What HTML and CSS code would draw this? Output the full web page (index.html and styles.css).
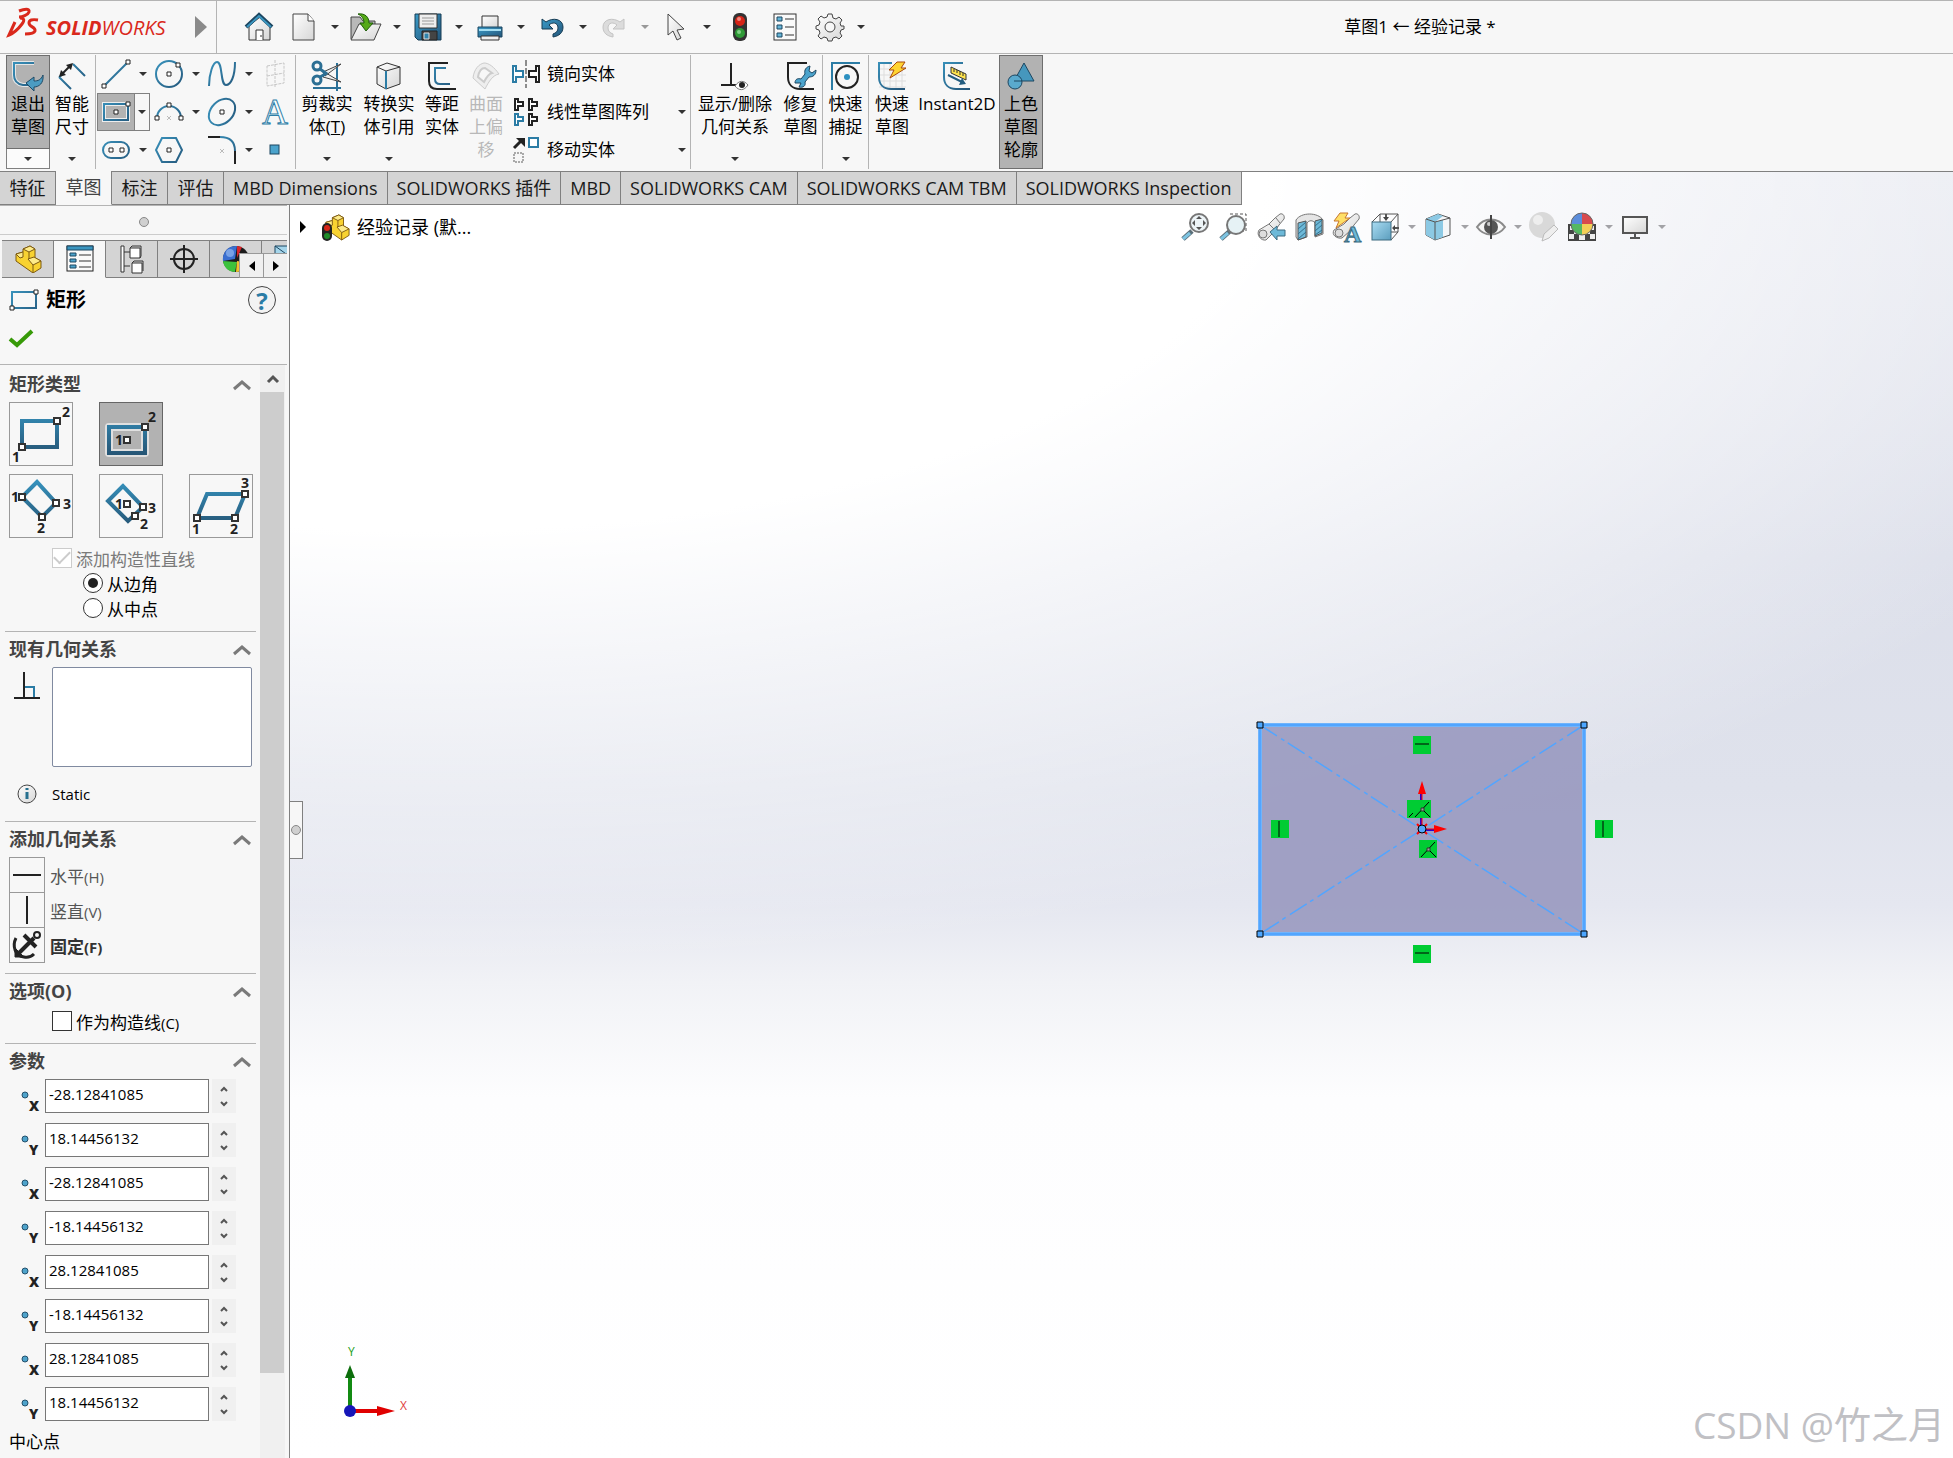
FILE: index.html
```html
<!DOCTYPE html>
<html lang="zh-CN">
<head>
    <meta charset="UTF-8">
    <meta name="viewport" content="width=device-width, initial-scale=1.0">
    <title>SOLIDWORKS - 草图1</title>
    <link rel="stylesheet" href="styles.css">
</head>
<body>
    <!-- shared gradients and symbols -->
    <svg class="defs" width="0" height="0" aria-hidden="true">
        <defs>
            <linearGradient id="blue" x1="0" y1="0" x2="1" y2="1">
                <stop offset="0" stop-color="#3a9bc8"/><stop offset="1" stop-color="#24567a"/>
            </linearGradient>
            <linearGradient id="blueLine" gradientUnits="userSpaceOnUse" x1="0" y1="0" x2="28" y2="28">
                <stop offset="0" stop-color="#3a95bf"/><stop offset="1" stop-color="#24567a"/>
            </linearGradient>
            <linearGradient id="tileLine" gradientUnits="userSpaceOnUse" x1="0" y1="8" x2="0" y2="52">
                <stop offset="0" stop-color="#3590bb"/><stop offset="1" stop-color="#265676"/>
            </linearGradient>
            <linearGradient id="lightBlue" x1="0" y1="0" x2="1" y2="1">
                <stop offset="0" stop-color="#a9dcf2"/><stop offset="1" stop-color="#5b9dbd"/>
            </linearGradient>
            <linearGradient id="paper" x1="0" y1="0" x2="1" y2="1">
                <stop offset="0" stop-color="#ffffff"/><stop offset="1" stop-color="#d6d6d6"/>
            </linearGradient>
            <symbol id="up" viewBox="0 0 20 12"><path d="M2 10 10 3l8 7" fill="none" stroke="#7a7a7a" stroke-width="3"/></symbol>
            <symbol id="spinUp" viewBox="0 0 8 6"><path d="M1 5 4 2l3 3" fill="none" stroke="#555" stroke-width="2"/></symbol>
            <symbol id="spinDown" viewBox="0 0 8 6"><path d="M1 1l3 3 3-3" fill="none" stroke="#555" stroke-width="2"/></symbol>
            <symbol id="dot" viewBox="0 0 8 8"><circle cx="4" cy="4" r="3" fill="#4ea3cb" stroke="#24506c"/></symbol>
            <symbol id="part" viewBox="0 0 28 28">
                <path d="M9 4 16 1l5 3v9l6 3v7l-8 5L2 16V9l7-2z" fill="#f8d231" stroke="#7d5a12"/>
                <path d="M9 4l6 3 6-3-5-3zM2 9l7-2v5l-3 1zM14 14l6-2 7 4-8 4z" fill="#fdeb8a" stroke="#7d5a12"/>
                <path d="M15 7v7M19 20v8" fill="none" stroke="#7d5a12"/>
            </symbol>
        </defs>
    </svg>

    <header class="titlebar">
        <div class="brand">
            <svg width="32" height="32" viewBox="0 0 32 32" fill="none" stroke="#da291c" stroke-width="3">
                <path d="M11 3c5-2 11-3 10 1-1 3-7 5-10 5M12 10c4 0 5 2 2 6-3 4-8 9-13 11l6-13"/>
                <path d="M30 12c-6-1-9 0-9 3 0 4 7 4 6 8-1 3-6 3-10 3"/>
            </svg>
            <span class="brand-name"><b>SOLID</b>WORKS</span>
            <button class="play" aria-label="展开菜单"></button>
        </div>
        <div class="quick">
            <button class="tool" aria-label="主页"><svg width="28" height="28" viewBox="0 0 28 28">
                <path d="M4 13v14h21V13l-10-9z" fill="url(#paper)" stroke="#333"/>
                <path d="M11 27V17h7v10" fill="#fff" stroke="#333"/><path d="M16 22v2" stroke="#333"/>
                <path d="M1 14 14 2l13 12" fill="none" stroke="#1c4661" stroke-width="4"/>
                <path d="M2 14 14 3l12 11" fill="none" stroke="#3a95bf" stroke-width="2"/></svg></button>
            <button class="tool" aria-label="新建"><svg width="24" height="28" viewBox="0 0 24 28">
                <path d="M1 1h15l6 7v19H1z" fill="url(#paper)" stroke="#444"/><path d="M16 1v7h6" fill="#fff" stroke="#444"/></svg></button>
            <button class="caret" aria-label="新建选项"></button>
            <button class="tool" aria-label="打开"><svg width="32" height="28" viewBox="0 0 32 28">
                <path d="M1 26V4h9l3 4h12v4" fill="#b9b9b9" stroke="#444"/>
                <path d="M1 27 9 11h22l-7 16z" fill="url(#paper)" stroke="#444"/>
                <path d="M8 1c7-1 11 3 11 9h4l-7 8-6-8h4c0-4-2-7-6-9z" fill="#55a917" stroke="#1e5d09"/></svg></button>
            <button class="caret" aria-label="打开选项"></button>
            <button class="tool" aria-label="保存"><svg width="28" height="28" viewBox="0 0 28 28">
                <path d="M1 1h26v26H4l-3-3z" fill="url(#blue)" stroke="#173c54"/>
                <path d="M5 1h18v14H5z" fill="#eee" stroke="#333"/><path d="M8 5h12M8 8h12M8 11h12" stroke="#999"/>
                <path d="M8 18h15v9H8z" fill="#444" stroke="#222"/><path d="M10 20h5v6h-5z" fill="#2f83ac" stroke="#ddd"/></svg></button>
            <button class="caret" aria-label="保存选项"></button>
            <button class="tool" aria-label="打印"><svg width="26" height="28" viewBox="0 0 26 28">
                <path d="M5 3h16v12H5z" fill="url(#paper)" stroke="#333"/>
                <path d="M1 14h24v10H1z" fill="url(#blue)" stroke="#1c4661"/><path d="M2 17h22" stroke="#a4def2" stroke-width="2"/>
                <path d="M4 23h18v4H4z" fill="#eee" stroke="#333"/></svg></button>
            <button class="caret" aria-label="打印选项"></button>
            <button class="tool" aria-label="撤消"><svg width="24" height="24" viewBox="0 0 24 24">
                <path d="M2 4v10h11l-4-4c3-3 9-3 9 3 0 3-2 5-5 6v3c6-1 10-4 10-10C23 4 13 2 6 7z" fill="url(#blue)" stroke="#173c54"/></svg></button>
            <button class="caret" aria-label="撤消选项"></button>
            <button class="tool" aria-label="重做" disabled><svg width="24" height="24" viewBox="0 0 24 24">
                <path d="M22 4v10H11l4-4c-3-3-9-3-9 3 0 3 2 5 5 6v3C5 21 1 18 1 12 1 4 11 2 18 7z" fill="#dcdcdc" stroke="#c4c4c4"/></svg></button>
            <button class="caret dim" aria-label="重做选项"></button>
            <button class="tool" aria-label="选择"><svg width="20" height="30" viewBox="0 0 20 30">
                <path d="M2 2v21l5-4 4 9 4-2-4-8 7-1z" fill="url(#paper)" stroke="#444"/></svg></button>
            <button class="caret" aria-label="选择选项"></button>
            <div class="quick-end">
                <button class="tool" aria-label="重建模型"><svg width="14" height="28" viewBox="0 0 14 28">
                    <rect width="14" height="28" rx="6" fill="#333"/><circle cx="7" cy="8" r="5" fill="#d62518"/><circle cx="6" cy="6" r="2" fill="#f08a80"/>
                    <circle cx="7" cy="20" r="5" fill="#2f9a37"/><circle cx="6" cy="19" r="2" fill="#84cf88"/></svg></button>
                <button class="tool" aria-label="文件属性"><svg width="24" height="28" viewBox="0 0 24 28">
                    <rect x="1" y="1" width="22" height="26" fill="#fafafa" stroke="#333"/>
                    <path d="M4 4h5v4H4zM4 12h5v4H4zM4 20h5v4H4z" fill="#66b6d8" stroke="#1c4661"/><path d="M12 6h9M12 14h9M12 22h9" stroke="#333"/></svg></button>
                <button class="tool" aria-label="选项"><svg width="28" height="28" viewBox="0 0 28 28">
                    <path d="M12 1h4l1 4 3 1 3-2 3 3-2 3 1 3 3 0v3l-3 1-1 3 2 3-3 3-3-2-3 1-1 3h-4l-1-3-3-1-3 2-3-3 2-3-1-3-3-1v-3l3-1 1-3-2-3 3-3 3 2 3-1z" fill="url(#paper)" stroke="#444"/>
                    <circle cx="14" cy="14" r="5" fill="#f7f7f7" stroke="#444"/></svg></button>
                <button class="caret" aria-label="选项菜单"></button>
            </div>
        </div>
        <h1 class="doc-title">草图1 ← 经验记录 *</h1>
    </header>

    <section class="ribbon">
        <div class="cmd split">
            <button class="cmd-main"><svg width="32" height="32" viewBox="0 0 32 32">
                <path d="M22 3H2v12c0 5 3 9 9 10h5" fill="none" stroke="#e6e6e6" stroke-width="4"/>
                <path d="M22 3H2v12c0 5 3 9 9 10h5" fill="none" stroke="url(#blueLine)" stroke-width="2"/>
                <path d="M31 15c1 8-4 12-9 12v4l-8-8 8-6v4c4 0 7-1 9-6z" fill="#4b9cc2" stroke="#1f4a66"/></svg><span>退出<br>草图</span></button>
            <button class="cmd-drop caret" aria-label="退出草图选项"></button>
        </div>
        <div class="cmd">
            <button class="cmd-main"><svg width="32" height="32" viewBox="0 0 32 32">
                <path d="M17 4l12 12M3 17l12 12M3 17l3-2" fill="none" stroke="url(#blueLine)" stroke-width="2"/>
                <path d="M6 14 14 6" stroke="#222" stroke-width="2"/><path d="M17 3l-2 7-5-5zM3 17l2-7 5 5z" fill="#222"/></svg><span>智能<br>尺寸</span></button>
            <button class="cmd-drop caret" aria-label="智能尺寸选项"></button>
        </div>

        <div class="sketch-tools">
            <div class="pair"><button class="mini" aria-label="直线"><svg width="28" height="28" viewBox="0 0 28 28">
                <path d="M2 26 26 2" stroke="url(#blueLine)" stroke-width="2"/><path d="M0 24h4v4H0zM24 0h4v4h-4z" fill="#fff" stroke="#222"/></svg></button><button class="caret" aria-label="直线选项"></button></div>
            <div class="pair"><button class="mini" aria-label="圆"><svg width="28" height="28" viewBox="0 0 28 28">
                <circle cx="14" cy="14" r="13" fill="none" stroke="url(#blueLine)" stroke-width="2"/><path d="M12 12h4v4h-4zM21 3h4v4h-4z" fill="#fff" stroke="#222"/></svg></button><button class="caret" aria-label="圆选项"></button></div>
            <div class="pair"><button class="mini" aria-label="样条曲线"><svg width="28" height="28" viewBox="0 0 28 28">
                <path d="M1 26C1 14 5 2 9 2c6 0 3 23 9 23 5 0 9-9 9-23" fill="none" stroke="url(#blueLine)" stroke-width="2"/></svg></button><button class="caret" aria-label="样条曲线选项"></button></div>
            <div class="pair"><button class="mini" aria-label="基准面" disabled><svg width="28" height="28" viewBox="0 0 28 28">
                <path d="M6 6 23 3v20L6 26zM14 0v28M6 16l17-3" fill="none" stroke="#c6c6c6" stroke-dasharray="3 1"/></svg></button></div>
            <div class="pair active"><button class="mini" aria-label="中心矩形"><svg width="28" height="28" viewBox="0 0 28 28">
                <path d="M2 6h24v16H2z" fill="none" stroke="#eee" stroke-width="4"/><path d="M2 6h24v16H2z" fill="none" stroke="url(#blueLine)" stroke-width="2"/><path d="M12 12h4v4h-4zM24 4h4v4h-4z" fill="#fff" stroke="#222"/></svg></button><button class="caret" aria-label="矩形选项"></button></div>
            <div class="pair"><button class="mini" aria-label="圆弧"><svg width="28" height="28" viewBox="0 0 28 28">
                <path d="M2 20a12 12 0 0 1 24 0" fill="none" stroke="url(#blueLine)" stroke-width="2"/><path d="M0 18h4v4H0zM24 18h4v4h-4zM12 5h4v4h-4z" fill="#fff" stroke="#222"/><path d="M12 18l4 4M16 18l-4 4" stroke="#bbb"/></svg></button><button class="caret" aria-label="圆弧选项"></button></div>
            <div class="pair"><button class="mini" aria-label="椭圆"><svg width="28" height="28" viewBox="0 0 28 28">
                <ellipse cx="14" cy="14" rx="15" ry="11" transform="rotate(-45 14 14)" fill="none" stroke="url(#blueLine)" stroke-width="2"/><path d="M12 12h4v4h-4z" fill="#fff" stroke="#222"/></svg></button><button class="caret" aria-label="椭圆选项"></button></div>
            <div class="pair"><button class="mini letter">A</button></div>
            <div class="pair"><button class="mini" aria-label="直槽口"><svg width="28" height="28" viewBox="0 0 28 28">
                <rect x="1" y="6" width="26" height="16" rx="8" fill="none" stroke="url(#blueLine)" stroke-width="2"/><path d="M7 12h4v4H7zM18 12h4v4h-4z" fill="#fff" stroke="#222"/></svg></button><button class="caret" aria-label="槽口选项"></button></div>
            <div class="pair"><button class="mini" aria-label="多边形"><svg width="28" height="28" viewBox="0 0 28 28">
                <path d="M7 2h14l6 12-6 12H7L1 14z" fill="none" stroke="url(#blueLine)" stroke-width="2"/><path d="M12 12h4v4h-4z" fill="#fff" stroke="#222"/></svg></button></div>
            <div class="pair"><button class="mini" aria-label="圆角"><svg width="28" height="28" viewBox="0 0 28 28">
                <path d="M0 1h12M27 15v13" stroke="#222" stroke-width="2"/><path d="M12 1c10 0 15 5 15 14" fill="none" stroke="url(#blueLine)" stroke-width="2"/><path d="M12 13l4 4M16 13l-4 4" stroke="#bbb"/></svg></button><button class="caret" aria-label="圆角选项"></button></div>
            <div class="pair"><button class="mini" aria-label="点"><svg width="28" height="28" viewBox="0 0 28 28">
                <rect x="9" y="9" width="9" height="9" fill="#4ba3cc" stroke="#1c4661"/></svg></button></div>
        </div>

        <div class="cmd wide">
            <button class="cmd-main"><svg width="32" height="32" viewBox="0 0 32 32">
                <path d="M26 3v28M2 28h28" stroke="#2b7198" stroke-width="2"/>
                <path d="M12 12 30 4l-16 12zM12 17l18 5-15-9z" fill="#eee" stroke="#444"/>
                <circle cx="6" cy="6" r="4" fill="none" stroke="#2c6f94" stroke-width="3"/><circle cx="6" cy="20" r="4" fill="none" stroke="#2c6f94" stroke-width="3"/>
                <path d="M9 9l7 5M9 17l7-4" stroke="#2c6f94" stroke-width="3"/></svg><span>剪裁实<br>体(<u>T</u>)</span></button>
            <button class="cmd-drop caret" aria-label="剪裁选项"></button>
        </div>
        <div class="cmd wide">
            <button class="cmd-main"><svg width="32" height="32" viewBox="0 0 32 32">
                <path d="M4 7 14 3l13 4v17l-14 5-9-5z" fill="url(#paper)" stroke="#333"/><path d="M4 7l9 4 14-4" fill="none" stroke="#333"/><path d="M13 11v18" stroke="#2b7ca5" stroke-width="2"/></svg><span>转换实<br>体引用</span></button>
            <button class="cmd-drop caret" aria-label="转换选项"></button>
        </div>
        <div class="cmd">
            <button class="cmd-main"><svg width="32" height="32" viewBox="0 0 32 32">
                <path d="M22 3H3v18c0 5 3 8 8 8h19" fill="none" stroke="#222" stroke-width="2"/><path d="M20 8H9v11c0 3 2 5 5 5h10" fill="none" stroke="url(#blueLine)" stroke-width="2"/></svg><span>等距<br>实体</span></button>
        </div>
        <div class="cmd">
            <button class="cmd-main" disabled><svg width="32" height="32" viewBox="0 0 32 32">
                <path d="M3 18C4 9 9 4 14 3c5 0 10 4 15 11-6 1-10 7-14 15z" fill="#eee" stroke="#ccc"/><path d="M8 17c1-6 4-9 7-9l7 5c-4 1-6 5-8 9z" fill="#f7f7f7" stroke="#ccc" stroke-width="2"/></svg><span>曲面<br>上偏<br>移</span></button>
        </div>

        <div class="cmd-list">
            <div class="cmd-row"><button class="row-main"><svg width="30" height="30" viewBox="0 0 30 30">
                <path d="M15 1v28" stroke="#222" stroke-dasharray="6 2"/><path d="M2 7h3v5h7v6H5v5H2z" fill="#fff" stroke="#2b7ca5" stroke-width="2"/><path d="M28 7h-3v5h-7v6h7v5h3z" fill="#fff" stroke="#222" stroke-width="2"/></svg>镜向实体</button></div>
            <div class="cmd-row"><button class="row-main"><svg width="30" height="30" viewBox="0 0 30 30">
                <path d="M4 2h3v3h5v4H7v4H4zM18 2h3v3h5v4h-5v4h-3zM18 17h3v3h5v4h-5v4h-3z" fill="#fff" stroke="#222" stroke-width="2"/><path d="M4 17h3v3h5v4H7v4H4z" fill="#fff" stroke="#2b7ca5" stroke-width="2"/></svg>线性草图阵列</button><button class="caret" aria-label="阵列选项"></button></div>
            <div class="cmd-row"><button class="row-main"><svg width="30" height="30" viewBox="0 0 30 30">
                <path d="M3 13l8-8" stroke="#222" stroke-width="3"/><path d="M5 3h9v9z" fill="#222"/><rect x="18" y="3" width="9" height="9" fill="#fff" stroke="#2b7ca5" stroke-width="2"/><rect x="3" y="18" width="9" height="9" fill="none" stroke="#aaa" stroke-width="2" stroke-dasharray="2 1"/></svg>移动实体</button><button class="caret" aria-label="移动选项"></button></div>
        </div>

        <div class="cmd relation">
            <button class="cmd-main"><svg width="32" height="32" viewBox="0 0 32 32">
                <path d="M12 3v22M2 25h20" stroke="#222" stroke-width="2"/><path d="M16 26c4-6 9-6 13-1-4 6-9 6-13 1z" fill="#fff" stroke="#777"/><circle cx="23" cy="25" r="3" fill="#222"/></svg><span>显示/删除<br>几何关系</span></button>
            <button class="cmd-drop caret" aria-label="几何关系选项"></button>
        </div>
        <div class="cmd line-after">
            <button class="cmd-main"><svg width="32" height="32" viewBox="0 0 32 32">
                <path d="M22 3H3v14c0 7 4 12 12 12h14" fill="none" stroke="#222" stroke-width="2"/><path d="M10 23c0-4 3-5 6-4l4-5c-1-4 1-7 5-8l-1 5 3 2 4-3c0 5-3 7-7 7l-4 5c1 4-2 6-6 5l2-4z" fill="#4ba3cc" stroke="#1c4661"/></svg><span>修复<br>草图</span></button>
        </div>
        <div class="cmd middle line-after">
            <button class="cmd-main"><svg width="32" height="32" viewBox="0 0 32 32">
                <path d="M2 30V3h28" fill="none" stroke="#2b7ca5" stroke-width="2"/><circle cx="17" cy="17" r="11" fill="none" stroke="#222" stroke-width="2"/><circle cx="17" cy="17" r="3" fill="#2b8fc0"/></svg><span>快速<br>捕捉</span></button>
            <button class="cmd-drop caret" aria-label="快速捕捉选项"></button>
        </div>
        <div class="cmd middle">
            <button class="cmd-main"><svg width="32" height="32" viewBox="0 0 32 32">
                <path d="M8 3v27M14 3v27M20 3v27M26 3v27M3 9h27M3 15h27M3 21h27M3 27h27" stroke="#ddd"/><path d="M16 3H3v14c0 7 4 12 12 12h14" fill="none" stroke="url(#blueLine)" stroke-width="2"/><path d="M21 2h8l-4 6h5L14 18l4-8h-5z" fill="#ffd431" stroke="#a8480d"/></svg><span>快速<br>草图</span></button>
        </div>
        <div class="cmd instant">
            <button class="cmd-main"><svg width="32" height="32" viewBox="0 0 32 32">
                <path d="M22 3H3v14c0 7 4 12 12 12h14" fill="none" stroke="url(#blueLine)" stroke-width="2"/><path d="M10 7l15 7v6l-15-7z" fill="#ffe34d" stroke="#333"/><path d="M13 9v3M16 10v3M19 11v4M22 13v3" stroke="#333"/><path d="M7 15l14 7" stroke="#235d80" stroke-width="2"/><path d="M18 25l7-1-4-6z" fill="#235d80"/></svg><span>Instant2D</span></button>
        </div>
        <div class="cmd pressed">
            <button class="cmd-main"><svg width="32" height="32" viewBox="0 0 32 32">
                <path d="M19 3l10 18H9z" fill="#4697bd" stroke="#1c4661"/><circle cx="10" cy="22" r="7" fill="#5aa9cd" stroke="#1c4661"/><path d="M9 21h8" stroke="#1c4661"/></svg><span>上色<br>草图<br>轮廓</span></button>
        </div>
    </section>

    <main class="workspace">
        <nav class="tabs">
            <a href="#" class="tab">特征</a>
            <a href="#" class="tab current">草图</a>
            <a href="#" class="tab">标注</a>
            <a href="#" class="tab">评估</a>
            <a href="#" class="tab">MBD Dimensions</a>
            <a href="#" class="tab">SOLIDWORKS 插件</a>
            <a href="#" class="tab">MBD</a>
            <a href="#" class="tab">SOLIDWORKS CAM</a>
            <a href="#" class="tab">SOLIDWORKS CAM TBM</a>
            <a href="#" class="tab">SOLIDWORKS Inspection</a>
        </nav>

        <div class="body">
            <aside class="panel">
                <div class="grip"><span class="knob"></span></div>
                <div class="panel-tabs">
                    <button class="ptab" aria-label="特征树"><svg width="28" height="28"><use href="#part"/></svg></button>
                    <button class="ptab on" aria-label="属性管理器"><svg width="28" height="28" viewBox="0 0 28 28">
                        <rect x="1" y="1" width="26" height="25" fill="#fafafa" stroke="#222"/><path d="M1 1h26v4H1z" fill="#3a95bf" stroke="#1c4661"/>
                        <path d="M4 8h6v3H4zM4 14h6v3H4zM4 20h6v3H4z" fill="#4ba3cc" stroke="#1c4661"/><path d="M13 10h12M13 16h12M13 22h12" stroke="#333"/></svg></button>
                    <button class="ptab" aria-label="配置管理器"><svg width="28" height="28" viewBox="0 0 28 28">
                        <path d="M3 1h3v26H3zM6 7h6M6 21h6" fill="#fff" stroke="#333"/><path d="M12 3h10v10H12zM14 18h10v10H14z" fill="#fff" stroke="#333"/><path d="M12 3l2-2h9v10l-1 2M14 18l2-2h9v10" fill="none" stroke="#333"/></svg></button>
                    <button class="ptab" aria-label="尺寸专家"><svg width="28" height="28" viewBox="0 0 28 28">
                        <circle cx="14" cy="14" r="10" fill="none" stroke="#222" stroke-width="2"/><path d="M14 0v28M0 14h28" stroke="#222" stroke-width="2"/></svg></button>
                    <button class="ptab" aria-label="外观管理器"><svg width="28" height="28" viewBox="0 0 28 28">
                        <circle cx="14" cy="14" r="13" fill="#1b1b1b"/><path d="M15 1A13 13 0 0 0 1 16l12-2z" fill="#3b6fd0"/><path d="M1 16c1 7 6 11 12 11l2-10z" fill="#3cc23c"/><path d="M15 1v12l5-11z" fill="#d7262b"/><path d="M14 27c6 0 11-4 13-9l-12-2z" fill="#f0c22c"/><circle cx="8" cy="8" r="4" fill="#a4c4f4" opacity=".6"/></svg></button>
                    <button class="ptab" aria-label="分析"><svg width="28" height="28" viewBox="0 0 28 28">
                        <path d="M1 1h26v10H1z" fill="#a5d5ea" stroke="#1c4661"/><path d="M1 1l14 10V4l9 7" fill="none" stroke="#1c4661"/></svg></button>
                    <div class="tab-scroll">
                        <button aria-label="上一个"><svg width="6" height="10" viewBox="0 0 6 10"><path d="M6 0v10L0 5z"/></svg></button>
                        <button aria-label="下一个"><svg width="6" height="10" viewBox="0 0 6 10"><path d="M0 0v10l6-5z"/></svg></button>
                    </div>
                </div>

                <div class="panel-head">
                    <div class="panel-title">
                        <svg width="28" height="20" viewBox="0 0 28 20"><path d="M2 2h24v16H2z" fill="none" stroke="url(#blueLine)" stroke-width="2"/><path d="M0 16h4v4H0zM24 0h4v4h-4z" fill="#fff" stroke="#222"/></svg>
                        <h2>矩形</h2>
                        <button class="help" aria-label="帮助">?</button>
                    </div>
                    <button class="accept" aria-label="确定"><svg width="24" height="18" viewBox="0 0 24 18"><path d="M0 9l7 6L22 1" fill="none" stroke="#379a08" stroke-width="4"/></svg></button>
                </div>

                <div class="scroller">
                    <div class="sections">
                        <section class="group">
                            <h3>矩形类型<svg width="20" height="12"><use href="#up"/></svg></h3>
                            <div class="tiles">
                                <button class="tile" aria-label="边角矩形"><svg width="62" height="62" viewBox="1 1 62 62">
                                    <path d="M13 19h35v26H13z" class="line"/><path d="M45 16h6v6h-6zM10 42h6v6h-6z" class="mark"/><text x="57" y="15">2</text><text x="7" y="60">1</text></svg></button>
                                <button class="tile chosen" aria-label="中心矩形类型"><svg width="62" height="62" viewBox="1 1 62 62">
                                    <path d="M10 25h36v26H10z" class="halo"/><path d="M10 25h36v26H10z" class="line"/><path d="M43 22h6v6h-6zM25 35h6v6h-6z" class="mark"/><text x="53" y="20">2</text><text x="20" y="43">1</text></svg></button>
                                <span></span>
                                <button class="tile" aria-label="三点边角矩形"><svg width="62" height="62" viewBox="1 1 62 62">
                                    <path d="M28 8 13 23l20 20 14-14z" class="line"/><path d="M10 20h6v6h-6zM44 26h6v6h-6zM30 40h6v6h-6z" class="mark"/><text x="6" y="28">1</text><text x="58" y="35">3</text><text x="32" y="59">2</text></svg></button>
                                <button class="tile" aria-label="三点中心矩形"><svg width="62" height="62" viewBox="1 1 62 62">
                                    <path d="M24 12 9 27l20 20 15-14z" class="line"/><path d="M41 30h6v6h-6zM33 39h6v6h-6zM25 27h6v6h-6z" class="mark"/><text x="20" y="35">1</text><text x="53" y="39">3</text><text x="45" y="55">2</text></svg></button>
                                <button class="tile" aria-label="平行四边形"><svg width="62" height="62" viewBox="1 1 62 62">
                                    <path d="M8 44 18 20h38L46 44z" class="line"/><path d="M53 17h6v6h-6zM43 41h6v6h-6zM5 41h6v6H5z" class="mark"/><text x="7" y="60">1</text><text x="45" y="60">2</text><text x="56" y="14">3</text></svg></button>
                            </div>
                            <div class="choices">
                                <label class="check off"><input type="checkbox" checked disabled>添加构造性直线</label>
                                <label class="check sub"><input type="radio" name="from" checked>从边角</label>
                                <label class="check sub"><input type="radio" name="from">从中点</label>
                            </div>
                        </section>

                        <section class="group">
                            <h3>现有几何关系<svg width="20" height="12"><use href="#up"/></svg></h3>
                            <div class="existing">
                                <svg width="28" height="28" viewBox="0 0 28 28"><path d="M10 0v26M0 26h26" stroke="#222" stroke-width="2"/><path d="M11 15h9v10" fill="none" stroke="#2b7ca5" stroke-width="2"/></svg>
                                <select class="relations" size="4" aria-label="现有几何关系"></select>
                            </div>
                            <div class="status">
                                <svg width="20" height="20" viewBox="0 0 20 20"><circle cx="10" cy="10" r="9" fill="url(#paper)" stroke="#444"/><path d="M10 8v7M10 4v2" stroke="#27708f" stroke-width="3"/></svg>
                                <span>Static</span>
                            </div>
                        </section>

                        <section class="group">
                            <h3>添加几何关系<svg width="20" height="12"><use href="#up"/></svg></h3>
                            <div class="adders">
                                <button><i><svg width="28" height="28" viewBox="0 0 28 28"><path d="M0 14h28" stroke="#222" stroke-width="2"/></svg></i><span>水平<small>(H)</small></span></button>
                                <button><i><svg width="28" height="28" viewBox="0 0 28 28"><path d="M14 0v28" stroke="#222" stroke-width="2"/></svg></i><span>竖直<small>(V)</small></span></button>
                                <button class="strong"><i><svg width="28" height="28" viewBox="0 0 28 28" fill="none" stroke="#222"><circle cx="24" cy="4" r="3" stroke-width="2"/><path d="M21 7 5 23M11 4l12 12" stroke-width="4"/><path d="M3 7c-4 8-1 18 8 19 4 1 8-1 10-3" stroke-width="3"/><path d="M2 17v9h9z" fill="#222"/></svg></i><span>固定<small>(F)</small></span></button>
                            </div>
                        </section>

                        <section class="group">
                            <h3>选项(O)<svg width="20" height="12"><use href="#up"/></svg></h3>
                            <div class="choices-flat">
                                <label class="check"><input type="checkbox"><span>作为构造线<small>(C)</small></span></label>
                            </div>
                        </section>

                        <section class="group">
                            <h3>参数<svg width="20" height="12"><use href="#up"/></svg></h3>
                            <div class="params">
                                <div class="param"><label for="x1"><svg width="8" height="8"><use href="#dot"/></svg>X</label><input type="text" id="x1" value="-28.12841085"><div class="spin"><button aria-label="增加"><svg width="8" height="6"><use href="#spinUp"/></svg></button><button aria-label="减少"><svg width="8" height="6"><use href="#spinDown"/></svg></button></div></div>
                                <div class="param"><label for="y1"><svg width="8" height="8"><use href="#dot"/></svg>Y</label><input type="text" id="y1" value="18.14456132"><div class="spin"><button aria-label="增加"><svg width="8" height="6"><use href="#spinUp"/></svg></button><button aria-label="减少"><svg width="8" height="6"><use href="#spinDown"/></svg></button></div></div>
                                <div class="param"><label for="x2"><svg width="8" height="8"><use href="#dot"/></svg>X</label><input type="text" id="x2" value="-28.12841085"><div class="spin"><button aria-label="增加"><svg width="8" height="6"><use href="#spinUp"/></svg></button><button aria-label="减少"><svg width="8" height="6"><use href="#spinDown"/></svg></button></div></div>
                                <div class="param"><label for="y2"><svg width="8" height="8"><use href="#dot"/></svg>Y</label><input type="text" id="y2" value="-18.14456132"><div class="spin"><button aria-label="增加"><svg width="8" height="6"><use href="#spinUp"/></svg></button><button aria-label="减少"><svg width="8" height="6"><use href="#spinDown"/></svg></button></div></div>
                                <div class="param"><label for="x3"><svg width="8" height="8"><use href="#dot"/></svg>X</label><input type="text" id="x3" value="28.12841085"><div class="spin"><button aria-label="增加"><svg width="8" height="6"><use href="#spinUp"/></svg></button><button aria-label="减少"><svg width="8" height="6"><use href="#spinDown"/></svg></button></div></div>
                                <div class="param"><label for="y3"><svg width="8" height="8"><use href="#dot"/></svg>Y</label><input type="text" id="y3" value="-18.14456132"><div class="spin"><button aria-label="增加"><svg width="8" height="6"><use href="#spinUp"/></svg></button><button aria-label="减少"><svg width="8" height="6"><use href="#spinDown"/></svg></button></div></div>
                                <div class="param"><label for="x4"><svg width="8" height="8"><use href="#dot"/></svg>X</label><input type="text" id="x4" value="28.12841085"><div class="spin"><button aria-label="增加"><svg width="8" height="6"><use href="#spinUp"/></svg></button><button aria-label="减少"><svg width="8" height="6"><use href="#spinDown"/></svg></button></div></div>
                                <div class="param"><label for="y4"><svg width="8" height="8"><use href="#dot"/></svg>Y</label><input type="text" id="y4" value="18.14456132"><div class="spin"><button aria-label="增加"><svg width="8" height="6"><use href="#spinUp"/></svg></button><button aria-label="减少"><svg width="8" height="6"><use href="#spinDown"/></svg></button></div></div>
                            </div>
                            <p class="center-label">中心点</p>
                        </section>
                    </div>
                    <div class="scrollbar">
                        <button aria-label="向上滚动"><svg width="14" height="10" viewBox="0 0 14 10"><path d="M2 8l5-5 5 5" fill="none" stroke="#555" stroke-width="3"/></svg></button>
                        <div class="track"><div class="thumb"></div></div>
                    </div>
                </div>
            </aside>

            <div class="canvas">
                <div class="canvas-top">
                    <button class="tree">
                        <svg width="8" height="12" viewBox="0 0 8 12"><path d="M1 0l6 6-6 6z" fill="#000"/></svg>
                        <svg width="30" height="28" viewBox="0 0 30 28"><g transform="translate(3 0)"><use href="#part" width="26" height="28"/></g><rect x="1" y="10" width="10" height="18" rx="5" fill="#222"/><circle cx="6" cy="15" r="3" fill="#d62518"/><circle cx="6" cy="23" r="3" fill="#1e8a28"/></svg>
                        <span>经验记录 (默...</span>
                    </button>
                    <div class="views">
                        <button class="view" aria-label="整屏显示全图"><svg width="28" height="28" viewBox="0 0 28 28">
                            <path d="M2 26l9-8" stroke="#5a6e78" stroke-width="5"/><path d="M2 26l7-6" stroke="#7dc4e2" stroke-width="3"/><circle cx="18" cy="10" r="9" fill="#edf4f7" stroke="#777" stroke-width="2"/><path d="M18 3l3 3h-6zM18 17l3-3h-6zM11 10l3-3v6zM25 10l-3-3v6z" fill="#555"/></svg></button>
                        <button class="view" aria-label="局部放大"><svg width="28" height="28" viewBox="0 0 28 28">
                            <path d="M11 1h16v17h-5" fill="none" stroke="#555" stroke-dasharray="3 2"/><path d="M2 26l9-8" stroke="#5a6e78" stroke-width="5"/><path d="M2 26l7-6" stroke="#7dc4e2" stroke-width="3"/><circle cx="17" cy="12" r="9" fill="#e6f2f5" stroke="#777" stroke-width="2"/></svg></button>
                        <button class="view" aria-label="上一视图"><svg width="28" height="28" viewBox="0 0 28 28">
                            <path d="M2 17 12 11 18 5 23 1c3-1 5 2 4 5l-5 6-4 6-9 9c-5 1-10-5-7-10z" fill="url(#paper)" stroke="#777"/><circle cx="6" cy="21" r="4" fill="#ddd" stroke="#777"/><path d="M12 11l6 6M19 5l4 5" stroke="#777"/><path d="M13 19l7-6v4h8v6h-8v4z" fill="#6db9d8" stroke="#3c6b80"/></svg></button>
                        <button class="view" aria-label="剖面视图"><svg width="28" height="28" viewBox="0 0 28 28">
                            <path d="M1 7c5-8 22-8 27 0v14l-8 3V10c-2-3-6-3-8 0v14l-9 3-2-3z" fill="#e5e5e5" stroke="#777"/><path d="M3 10l8-2v16l-8 3zM20 8l7-2v14l-7 3z" fill="#6db9d8" stroke="#555"/><path d="M3 16l8-7M3 21l8-7M3 26l8-7M20 13l7-6M20 18l7-6M20 22l7-5" stroke="#356f8c"/></svg></button>
                        <button class="view" aria-label="动态注解视图"><svg width="30" height="30" viewBox="0 0 30 30">
                            <path d="M2 18 12 12 18 6 23 2c3-1 5 2 4 5l-5 6-4 6-8 7c-5 1-11-3-8-8z" fill="url(#paper)" stroke="#777"/><circle cx="7" cy="21" r="4" fill="#ddd" stroke="#777"/><path d="M8 1h8l-3 5h5L4 16l3-7H2z" fill="#ffdf66" stroke="#c7762f"/><text x="12" y="30" class="a-glyph">A</text></svg></button>
                        <button class="view" aria-label="视图定向"><svg width="28" height="28" viewBox="0 0 28 28">
                            <path d="M1 9 9 1h18v18l-7 8M9 1v8M27 1l-7 8M20 19h7" fill="none" stroke="#555"/><rect x="1" y="9" width="19" height="18" fill="url(#lightBlue)" stroke="#3d6b80"/><path d="M15 1v5M22 15h6" stroke="#555" stroke-width="2"/><path d="M12 4h6l-3 4zM24 12v6l-3-3z" fill="#444"/></svg></button>
                        <button class="caret soft" aria-label="视图定向选项"></button>
                        <button class="view" aria-label="显示样式"><svg width="28" height="28" viewBox="0 0 28 28">
                            <path d="M2 6 14 1l12 4v17l-15 5-9-5z" fill="#f4f6f8" stroke="#555"/><path d="M2 6l9 3v18l-9-5zM11 9l8-2v17l-8 3zM2 6l12-5 5 2-8 6z" fill="#8cc9e4"/><path d="M2 6l9 3 15-4M11 9v18" fill="none" stroke="#555"/></svg></button>
                        <button class="caret soft" aria-label="显示样式选项"></button>
                        <button class="view" aria-label="隐藏/显示项目"><svg width="30" height="24" viewBox="0 0 30 24">
                            <path d="M1 12C8 2 22 2 29 12 22 22 8 22 1 12z" fill="#f6f6f6" stroke="#8a8a8a" stroke-width="2"/><circle cx="15" cy="12" r="7" fill="#555"/><circle cx="13" cy="9" r="2" fill="#ccc"/><path d="M15 0v24" stroke="#444" stroke-width="2"/></svg></button>
                        <button class="caret soft" aria-label="隐藏选项"></button>
                        <button class="view" aria-label="编辑外观" disabled><svg width="30" height="30" viewBox="0 0 30 30">
                            <circle cx="13" cy="13" r="13" fill="#d9d9d9"/><circle cx="9" cy="8" r="5" fill="#eee"/><path d="M13 29l2-7 10-9 4 4-9 9z" fill="#eee" stroke="#bbb"/></svg></button>
                        <button class="view" aria-label="应用布景"><svg width="28" height="30" viewBox="0 0 28 30">
                            <path d="M0 12h28v17H0z" fill="#444"/><path d="M2 14h4v4H2zM22 14h4v4h-4zM6 18h4v4H6zM18 18h4v4h-4zM1 22h5v5H1zM11 23h6v5h-6zM22 22h5v5h-5z" fill="#eee"/><path d="M14 1v11H3A11 11 0 0 1 14 1z" fill="#5b8ddb"/><path d="M14 1v11h11A11 11 0 0 0 14 1z" fill="#d84a4e"/><path d="M3 12h11v11A11 11 0 0 1 3 12z" fill="#55b862"/><path d="M25 12H14v11a11 11 0 0 0 11-11z" fill="#f3cf56"/><circle cx="14" cy="12" r="11" fill="none" stroke="#666"/></svg></button>
                        <button class="caret soft" aria-label="布景选项"></button>
                        <button class="view" aria-label="视图设定"><svg width="28" height="24" viewBox="0 0 28 24">
                            <rect x="2" y="2" width="24" height="16" fill="url(#paper)" stroke="#555" stroke-width="2"/><path d="M14 18v4M9 23h10" stroke="#555" stroke-width="2"/></svg></button>
                        <button class="caret soft" aria-label="视图设定选项"></button>
                    </div>
                </div>

                <button class="handle" aria-label="折叠面板"><span class="knob"></span></button>

                <svg class="sketch" width="370" height="260" viewBox="0 0 370 260">
                    <rect x="10" y="15" width="324" height="209" fill="#8f8fb9" fill-opacity=".8"/>
                    <path d="M10 15l324 209M334 15 10 224" fill="none" stroke="#52a5ff" stroke-width="1.5" stroke-dasharray="20 5 4 4"/>
                    <rect x="10" y="15" width="324" height="209" fill="none" stroke="#8ec2f8" stroke-width="4"/>
                    <rect x="10" y="15" width="324" height="209" fill="none" stroke="#52a5ff" stroke-width="3"/>
                    <path d="M7 12h6v6H7zM331 12h6v6h-6zM7 221h6v6H7zM331 221h6v6h-6z" fill="#4da6ff" stroke="#000"/>
                    <path d="M171 119V84M172 120h14" stroke="#3000c8" stroke-width="2"/>
                    <path d="M172 119V84M172 119h14" stroke="#f00"/>
                    <path d="M172 71l4 13h-8zM197 119l-13-4v8z" fill="#f00"/>
                    <path d="M163 26h18v18h-18zM21 110h18v18H21zM345 110h18v18h-18zM163 235h18v18h-18zM157 90h24v18h-24zM169 130h18v18h-18z" fill="#00cc33"/>
                    <path d="M165 34h14M29 111v16M353 111v16M165 243h14" fill="none" stroke="#000"/>
                    <path d="M165 107l14-15M173 100l7 7M159 107l4-4M171 147l14-15M179 140l7 7" fill="none" stroke="#000"/>
                    <path d="M171 98h3v3h-3zM177 138h3v3h-3z" fill="#9aa89a" stroke="#333"/>
                    <path d="M167 114l10 10M177 114l-10 10" stroke="#f00" stroke-width="2"/>
                    <circle cx="172" cy="119" r="4" fill="#52a5ff" stroke="#000"/>
                </svg>

                <svg class="triad" width="70" height="76" viewBox="0 0 70 76">
                    <path d="M11 66V26" stroke="#128a12" stroke-width="4"/><path d="M11 20l5 13H6z" fill="#0c6e0c"/>
                    <path d="M11 66h28" stroke="#e00000" stroke-width="4"/><path d="M56 66l-18-5v10z" fill="#e00000"/>
                    <circle cx="11" cy="66" r="6" fill="#1616b8"/>
                    <text x="9" y="11" fill="#1aa01a">Y</text><text x="61" y="65" fill="#e04040">X</text>
                </svg>

                <p class="watermark">CSDN @竹之月</p>
            </div>
        </div>
    </main>
</body>
</html>
```
FILE: styles.css
```css
:root {
    --chrome: #f7f7f7;
    --edge: #808080;
    --rule: #b4b4b4;
    --pressed: #b2b2b2;
    --font: "Open Sans", "Noto Sans CJK SC", sans-serif;
}
* {
    box-sizing: border-box;
}
body {
    margin: 0;
    height: 100vh;
    display: flex;
    flex-direction: column;
    overflow: hidden;
    font-family: var(--font);
    font-size: 17px;
    color: #000;
    background-color: #fff;
}
button {
    margin: 0;
    padding: 0;
    border: none;
    background: none;
    font: inherit;
    color: inherit;
    display: flex;
    align-items: center;
    justify-content: center;
    cursor: pointer;
}
svg {
    display: block;
    flex: none;
    overflow: visible;
}
.defs {
    position: absolute;
}
h1, h2, h3, p {
    margin: 0;
}

/* dropdown arrows */
.caret {
    width: 17px;
}
.caret::after {
    content: "";
    border: 4px solid transparent;
    border-top-color: #333;
    border-bottom: none;
}
.caret.dim::after {
    border-top-color: #999;
}
.caret.soft {
    width: 15px;
}
.caret.soft::after {
    border-top-color: #a2a2a6;
}

/* title bar */
.titlebar {
    display: flex;
    height: 54px;
    flex: none;
    background-color: var(--chrome);
    border-top: 1px solid var(--rule);
    border-bottom: 1px solid var(--rule);
}
.brand {
    width: 217px;
    flex: none;
    display: flex;
    align-items: center;
    padding-left: 8px;
    padding-bottom: 6px;
    border-right: 1px solid var(--rule);
}
.brand-name {
    margin-left: 6px;
    margin-top: 8px;
    width: 149px;
    font-size: 20px;
    font-style: italic;
    line-height: 24px;
    color: #da291c;
}
.play {
    width: 12px;
    height: 22px;
    margin-top: 6px;
    background-color: #8a8a8a;
    clip-path: polygon(0 0, 100% 50%, 0 100%);
}
.quick {
    display: flex;
    padding-left: 19px;
}
.quick .tool {
    width: 45px;
}
.quick-end {
    display: flex;
    padding-left: 2px;
}
.doc-title {
    flex: 1;
    padding-left: 18px;
    text-align: center;
    font-size: 17px;
    font-weight: normal;
    line-height: 52px;
}

/* command ribbon */
.ribbon {
    display: flex;
    height: 117px;
    flex: none;
    padding: 1px 0 2px 6px;
    background-color: var(--chrome);
}
.cmd {
    width: 44px;
    display: flex;
    flex-direction: column;
}
.cmd.middle {
    width: 46px;
}
.cmd.wide {
    width: 62px;
}
.cmd.relation {
    width: 88px;
}
.cmd.instant {
    width: 84px;
}
.cmd.line-after {
    border-right: 1px solid var(--rule);
}
.cmd-main {
    flex: 1;
    flex-direction: column;
    justify-content: flex-start;
    padding-top: 5px;
    line-height: 23px;
    white-space: nowrap;
}
.cmd-main:disabled {
    color: #b8b8b8;
}
.cmd-drop.caret {
    width: 100%;
    height: 20px;
}
.cmd.split .cmd-main, .cmd.pressed .cmd-main {
    background-color: var(--pressed);
    border: 1px solid #6e6e6e;
    padding-top: 4px;
}
.cmd.split .cmd-drop {
    background-color: #fbfbfb;
    border: 1px solid var(--edge);
    border-top: none;
}
.sketch-tools {
    width: 201px;
    display: grid;
    grid-template-columns: 53px 53px 53px 38px;
    grid-template-rows: repeat(3, 38px);
    padding-left: 1px;
    border-left: 1px solid var(--rule);
    border-right: 1px solid var(--rule);
    margin-left: 1px;
}
.pair {
    display: flex;
}
.mini {
    width: 38px;
}
.mini.letter {
    font-family: "Liberation Serif", serif;
    font-size: 36px;
    line-height: 36px;
    color: #f7fbfd;
    -webkit-text-stroke: 1px #2f7fa8;
}
.pair .caret {
    width: 15px;
}
.pair.active {
    border: 1px solid var(--edge);
}
.pair.active .mini {
    background-color: var(--pressed);
    border-right: 1px solid var(--edge);
}
.cmd-list {
    width: 183px;
    display: grid;
    grid-template-rows: repeat(3, 38px);
    padding-left: 3px;
    border-right: 1px solid var(--rule);
}
.cmd-row {
    display: flex;
    justify-content: space-between;
}
.row-main {
    gap: 6px;
    line-height: 36px;
}

/* workspace: the view gradient runs behind the tabs too */
.workspace {
    flex: 1;
    min-height: 0;
    display: flex;
    flex-direction: column;
    border-top: 1px solid var(--edge);
    background:
        radial-gradient(ellipse 95% 62% at 22% 0, #fff 0, #fff 45%, rgba(255, 255, 255, 0) 100%),
        linear-gradient(#e6e8f0 0, #dcdfea 30%, #dfe2ec 48%, #e5e7f0 57%, #f1f2f6 63%, #fdfdfe 72%, #fff 100%);
}
.tabs {
    display: flex;
    height: 33px;
    flex: none;
}
.tab {
    min-width: 56px;
    padding: 0 9px;
    background-color: #d4d4d4;
    border-right: 1px solid var(--edge);
    border-bottom: 1px solid var(--edge);
    color: #1a1a1a;
    font-size: 18px;
    line-height: 32px;
    text-align: center;
    text-decoration: none;
    white-space: nowrap;
}
.tab.current {
    margin-top: -1px;
    background-color: var(--chrome);
    border-bottom-color: var(--chrome);
    color: #444;
}
.body {
    flex: 1;
    min-height: 0;
    display: flex;
}

/* property panel */
.panel {
    width: 290px;
    flex: none;
    display: flex;
    flex-direction: column;
    background-color: var(--chrome);
    border-right: 1px solid var(--edge);
}
.knob {
    width: 10px;
    height: 10px;
    border-radius: 50%;
    border: 1px solid #888;
    background-color: #d0d0d0;
}
.grip {
    height: 30px;
    margin-right: 2px;
    display: flex;
    align-items: center;
    justify-content: center;
    padding-top: 4px;
    border-top: 1px solid var(--rule);
    border-bottom: 1px solid #ccc;
}
.panel-tabs {
    position: relative;
    display: flex;
    height: 38px;
    margin: 5px 2px 0 0;
    padding-left: 2px;
    overflow: hidden;
}
.ptab {
    width: 52px;
    flex: none;
    background-color: #d4d4d4;
    border: 1px solid var(--edge);
    border-left: none;
}
.ptab.on {
    background-color: var(--chrome);
    border-bottom-color: var(--chrome);
}
.tab-scroll {
    position: absolute;
    right: 0;
    bottom: 0;
    display: flex;
}
.tab-scroll button {
    width: 24px;
    height: 25px;
    background-color: #f0f0f0;
    border: 1px solid #999;
    border-right: none;
}
.panel-head {
    height: 87px;
    flex: none;
    margin-right: 2px;
    padding: 7px 11px 0 10px;
    border-bottom: 1px solid var(--rule);
}
.panel-title {
    display: flex;
    align-items: center;
}
.panel-title h2 {
    flex: 1;
    margin-left: 8px;
    font-size: 20px;
    line-height: 30px;
}
.help {
    width: 28px;
    height: 28px;
    border: 1px solid #444;
    border-radius: 50%;
    background-color: #f3f3f3;
    color: #2b7ca5;
    font-size: 24px;
    font-weight: bold;
}
.accept {
    margin-top: 15px;
}
.scroller {
    flex: 1;
    min-height: 0;
    display: flex;
    overflow: hidden;
}
.sections {
    width: 260px;
    padding: 1px 4px 0 5px;
}
.group {
    padding: 0 4px;
    border-top: 1px solid var(--rule);
}
.group:first-child {
    border-top-color: transparent;
}
.group h3 {
    display: flex;
    align-items: center;
    justify-content: space-between;
    height: 35px;
    font-size: 18px;
    line-height: 35px;
    color: #444;
}
.tiles {
    display: grid;
    grid-template-columns: repeat(3, 64px);
    grid-auto-rows: 64px;
    column-gap: 26px;
    row-gap: 8px;
}
.tile {
    border: 1px solid #999;
}
.tile.chosen {
    background-color: var(--pressed);
    border-color: #666;
}
.tile .line {
    fill: none;
    stroke: url(#tileLine);
    stroke-width: 4;
}
.tile .halo {
    fill: none;
    stroke: #e0e0e0;
    stroke-width: 8;
    stroke-linejoin: round;
}
.tile .mark {
    fill: #fff;
    stroke: #333;
    stroke-width: 2;
}
.tile text {
    font-size: 14px;
    font-weight: bold;
    fill: #222;
    text-anchor: middle;
}
.choices {
    display: flex;
    flex-direction: column;
    gap: 1px;
    padding: 8px 0 11px 43px;
}
.choices-flat {
    padding: 0 0 10px 43px;
}
.check {
    display: flex;
    align-items: center;
    height: 24px;
    gap: 4px;
}
.check.sub {
    margin-left: 31px;
}
.check.off {
    color: #7a7a7a;
}
.check input {
    appearance: none;
    width: 20px;
    height: 20px;
    margin: 0;
    display: grid;
    place-items: center;
    border: 1px solid #333;
    background-color: #fff;
}
.check input[type="radio"] {
    border-radius: 50%;
}
.check input[type="radio"]:checked::after {
    content: "";
    width: 10px;
    height: 10px;
    border-radius: 50%;
    background-color: #222;
}
.check input:disabled {
    border-color: #ccc;
}
.check input[type="checkbox"]:checked::after {
    content: "";
    width: 14px;
    height: 7px;
    margin-bottom: 5px;
    border: 2px solid #ccc;
    border-top: none;
    border-right: none;
    transform: rotate(-45deg);
}
small {
    font-size: 15px;
}
.existing {
    display: flex;
    gap: 10px;
    padding-left: 5px;
}
.existing svg {
    margin-top: 5px;
}
.relations {
    appearance: none;
    width: 200px;
    height: 100px;
    border: 1px solid #808aa0;
    background-color: #fff;
    overflow: hidden;
}
.status {
    display: flex;
    align-items: center;
    gap: 15px;
    height: 24px;
    margin: 15px 0;
    padding-left: 8px;
    font-size: 15px;
}
.adders {
    padding-bottom: 11px;
}
.adders button {
    gap: 5px;
    margin-bottom: -1px;
    color: #555;
}
.adders i {
    width: 36px;
    height: 36px;
    display: flex;
    align-items: center;
    justify-content: center;
    border: 1px solid #999;
}
.adders .strong {
    font-weight: bold;
    color: #333;
}
.params {
    display: grid;
    row-gap: 10px;
}
.param {
    display: flex;
    height: 34px;
}
.param label {
    width: 36px;
    padding: 12px 5px 0 12px;
    display: flex;
    font-size: 14px;
    line-height: 30px;
    font-weight: 800;
    color: #222;
}
.param input {
    width: 164px;
    border: 1px solid #777;
    background-color: #fff;
    padding: 0 3px 5px;
    font: 15px var(--font);
}
.spin {
    width: 24px;
    margin-left: 3px;
    padding: 2px 0;
    display: flex;
    flex-direction: column;
    background-color: #f0f0f0;
}
.spin button {
    flex: 1;
}
.center-label {
    margin-top: 9px;
    line-height: 24px;
}
.scrollbar {
    width: 25px;
    display: flex;
    flex-direction: column;
    background-color: #f0f0f0;
}
.scrollbar button {
    height: 27px;
}
.track {
    flex: 1;
    padding-right: 1px;
}
.thumb {
    height: 92%;
    background-color: #cdcdcd;
}

/* graphics area */
.canvas {
    position: relative;
    flex: 1;
    overflow: hidden;
}
.canvas-top {
    display: flex;
    justify-content: space-between;
    padding: 6px 284px 0 9px;
}
.tree {
    gap: 6px;
    font-size: 18px;
    line-height: 32px;
}
.tree svg:first-child {
    margin-right: 8px;
}
.views {
    display: flex;
    height: 32px;
}
.view {
    width: 38px;
}
.a-glyph {
    font: bold 24px "Liberation Serif", serif;
    fill: #6db9d8;
    stroke: #3c6b80;
}
.handle {
    position: absolute;
    left: 0;
    top: 50%;
    width: 13px;
    height: 58px;
    margin-top: -31px;
    background-color: var(--chrome);
    border: 1px solid var(--edge);
    border-left: none;
}
.sketch {
    position: absolute;
    left: 960px;
    top: 505px;
}
.triad {
    position: absolute;
    left: 49px;
    bottom: 37px;
    font-size: 12px;
}
.watermark {
    position: absolute;
    right: 8px;
    bottom: 7px;
    font-size: 37px;
    line-height: 52px;
    color: #c0c0c4;
}
```
